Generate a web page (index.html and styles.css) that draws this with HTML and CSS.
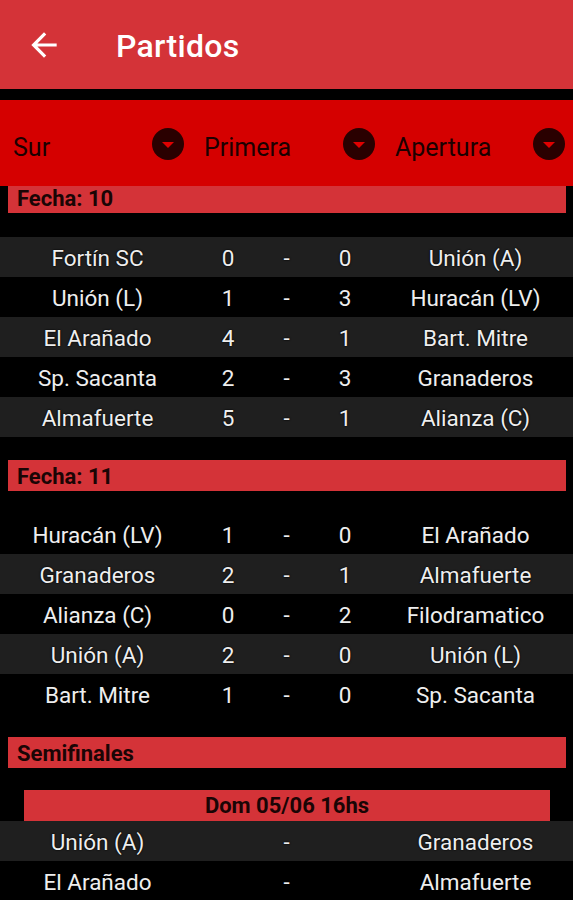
FILE: index.html
```html
<!DOCTYPE html>
<html lang="es">
<head>
<meta charset="utf-8">
<title>Partidos</title>
<link rel="stylesheet" href="styles.css">
</head>
<body>
<header class="appbar">
  <svg class="back" viewBox="0 0 24 24" width="38" height="38"><path d="M20 11H7.83l5.59-5.59L12 4l-8 8 8 8 1.41-1.41L7.83 13H20v-2z" fill="#fff"/></svg>
  <h1 class="title">Partidos</h1>
</header>
<div class="spinners">
  <div class="spinner"><span>Sur</span><span class="drop"></span></div>
  <div class="spinner"><span>Primera</span><span class="drop"></span></div>
  <div class="spinner"><span>Apertura</span><span class="drop"></span></div>
</div>
<main class="list">
  <div class="content">
    <section class="group">
      <div class="bar">Fecha: 10</div>
      <div class="rows">
        <div class="row alt"><span>Fortín SC</span><span>0</span><span>-</span><span>0</span><span>Unión (A)</span></div>
        <div class="row"><span>Unión (L)</span><span>1</span><span>-</span><span>3</span><span>Huracán (LV)</span></div>
        <div class="row alt"><span>El Arañado</span><span>4</span><span>-</span><span>1</span><span>Bart. Mitre</span></div>
        <div class="row"><span>Sp. Sacanta</span><span>2</span><span>-</span><span>3</span><span>Granaderos</span></div>
        <div class="row alt"><span>Almafuerte</span><span>5</span><span>-</span><span>1</span><span>Alianza (C)</span></div>
      </div>
    </section>
    <section class="group">
      <div class="bar">Fecha: 11</div>
      <div class="rows">
        <div class="row"><span>Huracán (LV)</span><span>1</span><span>-</span><span>0</span><span>El Arañado</span></div>
        <div class="row alt"><span>Granaderos</span><span>2</span><span>-</span><span>1</span><span>Almafuerte</span></div>
        <div class="row"><span>Alianza (C)</span><span>0</span><span>-</span><span>2</span><span>Filodramatico</span></div>
        <div class="row alt"><span>Unión (A)</span><span>2</span><span>-</span><span>0</span><span>Unión (L)</span></div>
        <div class="row"><span>Bart. Mitre</span><span>1</span><span>-</span><span>0</span><span>Sp. Sacanta</span></div>
      </div>
    </section>
    <section class="group">
      <div class="bar">Semifinales</div>
      <div class="rows">
        <div class="subbar">Dom 05/06 16hs</div>
        <div class="row alt"><span>Unión (A)</span><span></span><span>-</span><span></span><span>Granaderos</span></div>
        <div class="row"><span>El Arañado</span><span></span><span>-</span><span></span><span>Almafuerte</span></div>
      </div>
    </section>
  </div>
</main>
</body>
</html>
```
FILE: styles.css
```css
* { box-sizing: border-box; }
html, body { margin: 0; padding: 0; }
body {
  width: 573px;
  height: 900px;
  overflow: hidden;
  background: #000;
  font-family: Roboto, "Noto Sans", sans-serif;
}
.appbar {
  height: 89px;
  background: #d43338;
  display: flex;
  align-items: center;
  padding-left: 25px;
}
.back { display: block; flex: none; }
.title {
  margin: 3px 0 0 53px;
  color: #fff;
  font-size: 32px;
  font-weight: 500;
  letter-spacing: 0.3px;
}
.spinners {
  margin-top: 11px;
  height: 86px;
  background: #d50000;
  display: grid;
  grid-template-columns: repeat(3, 1fr);
}
.spinner {
  display: flex;
  align-items: center;
  justify-content: space-between;
  padding: 8px 7px 0 13px;
  font-size: 25px;
  color: #1c0000;
}
.spinner:last-child { padding-right: 8px; }
.drop {
  width: 32px;
  height: 32px;
  border-radius: 50%;
  background: #2a0000;
  display: flex;
  align-items: center;
  justify-content: center;
  margin-top: -6px;
}
.drop::after {
  content: "";
  width: 0;
  height: 0;
  border-left: 6px solid transparent;
  border-right: 6px solid transparent;
  border-top: 6px solid #e00000;
  margin-top: 2px;
}
.list {
  height: 714px;
  overflow: hidden;
}
.content { margin-top: -4px; }
.group { padding-bottom: 23px; }
.bar {
  margin: 0 7px 0 8px;
  height: 31px;
  background: #d43338;
  color: #1a0505;
  font-weight: 700;
  font-size: 22px;
  padding: 4px 0 0 9px;
}
.rows { margin-top: 24px; }
.subbar {
  margin: -1px 23px 0 24px;
  height: 31px;
  background: #d43338;
  color: #1a0505;
  font-weight: 700;
  font-size: 22px;
  text-align: center;
  padding-top: 3px;
}
.row {
  height: 40px;
  display: grid;
  grid-template-columns: 195px 66px 51px 66px 195px;
  align-items: center;
  text-align: center;
  color: #eeeeee;
  font-size: 22.5px;
  padding-top: 2px;
  text-shadow: 0 0 2px #000, 0 0 1px #000;
}
.row.alt { background: #1f1f1f; }
.group + .group .rows { margin-top: 23px; }
.group:last-child .rows { margin-top: 23px; }
```
